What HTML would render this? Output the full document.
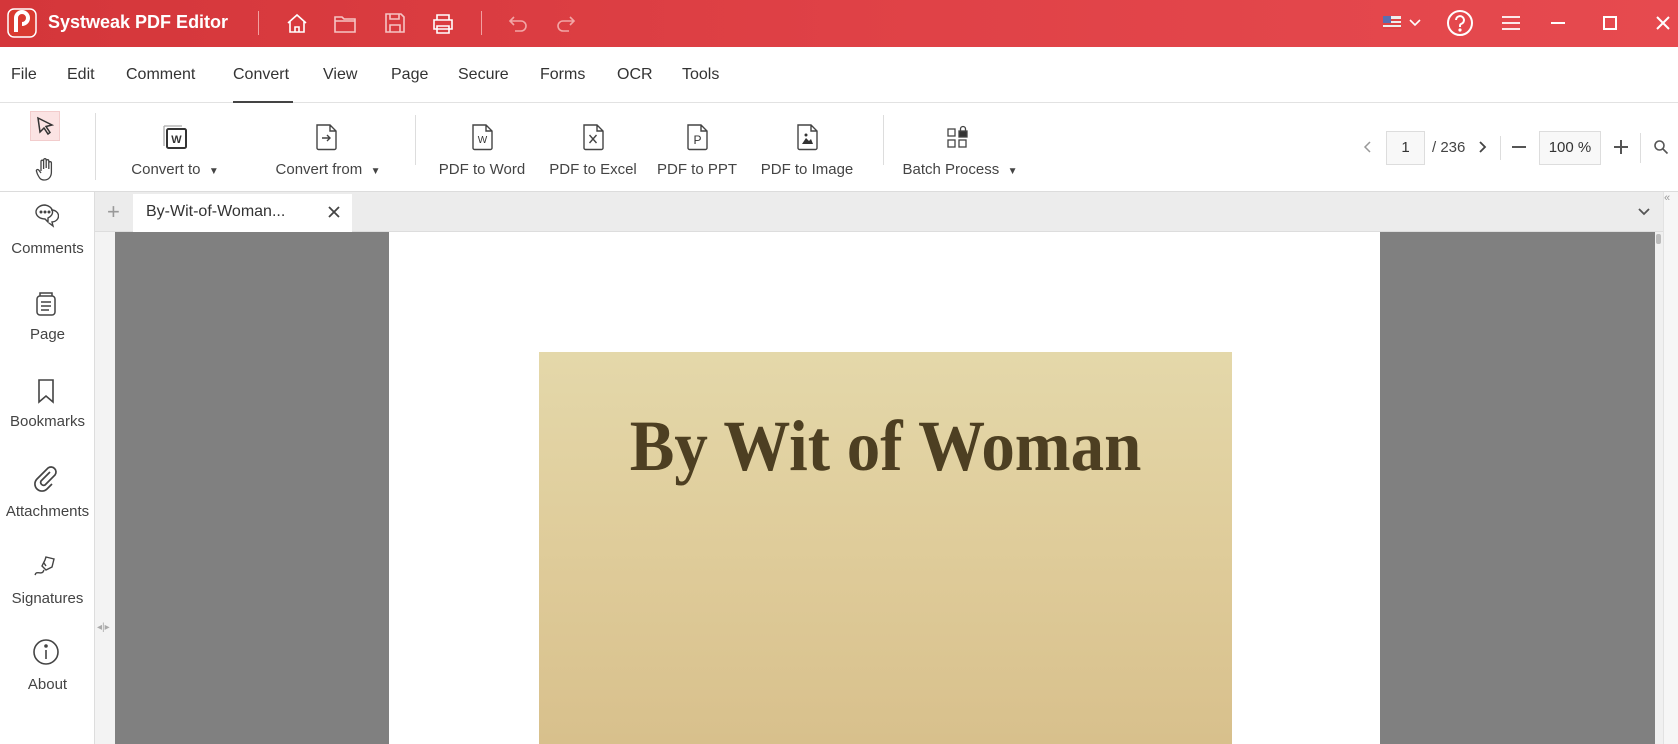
<!DOCTYPE html>
<html><head><meta charset="utf-8"><style>
*{margin:0;padding:0;box-sizing:border-box}
body{width:1678px;height:744px;overflow:hidden;font-family:"Liberation Sans",sans-serif;background:#fff;position:relative;color:#333}
.abs{position:absolute}
#title{left:0;top:0;width:1678px;height:47px;background:linear-gradient(90deg,#d4363a,#df4146 50%,#e64a4f)}
#menu{top:47px;left:0;width:1678px;height:56px;border-bottom:1px solid #e2e2e2;background:#fff}
.mi{position:absolute;top:19px;font-size:16px;color:#333}
#tb{top:103px;left:0;width:1678px;height:89px;border-bottom:1px solid #dcdcdc;background:#fff}
.lbl{position:absolute;font-size:15px;color:#444;white-space:nowrap;transform:translateX(-50%);top:58px}
.tic{position:absolute;top:19px;transform:translateX(-50%)}
.sep{position:absolute;width:1px;background:#ddd}
.sb{position:absolute;left:0;width:95px;text-align:center;font-size:15px;color:#444}
</style></head><body>
<div id="title" class="abs">
 <svg class="abs" style="left:7px;top:8px" width="30" height="30" viewBox="0 0 30 30"><rect x="1" y="1" width="28" height="28" rx="6" fill="#d93a30" stroke="#fff" stroke-width="1.5"/><path d="M9 24V10a6 6 0 0 1 12 0a6 6 0 0 1-6 6" fill="none" stroke="#fff" stroke-width="4"/></svg>
 <div class="abs" style="left:48px;top:12px;color:#fff;font-weight:bold;font-size:18px">Systweak PDF Editor</div>
 <div class="abs" style="left:258px;top:11px;width:1px;height:24px;background:#f2a0a0"></div>
 <div class="abs" style="left:481px;top:11px;width:1px;height:24px;background:#f2a0a0"></div>
 <svg class="abs" style="left:285px;top:12px" width="24" height="24" viewBox="0 0 24 24" fill="none" stroke="#fff" stroke-width="1.6"><path d="M3 11L12 3l9 8M5 9v11h14V9M10 20v-5h4v5"/></svg>
 <svg class="abs" style="left:333px;top:12px" width="24" height="24" viewBox="0 0 24 24" fill="none" stroke="#f6c4c4" stroke-width="1.6"><path d="M2 5h7l2 2h11v13H2zM2 9h20"/></svg>
 <svg class="abs" style="left:383px;top:11px" width="24" height="24" viewBox="0 0 24 24" fill="none" stroke="#f6c4c4" stroke-width="1.6"><path d="M3 3h15l3 3v15H3zM7 3v5h9V3M7 21v-7h10v7"/></svg>
 <svg class="abs" style="left:431px;top:12px" width="24" height="24" viewBox="0 0 24 24" fill="none" stroke="#fff" stroke-width="1.6"><path d="M6 8V3h12v5M3 8h18v9H3zM6 14h12v7H6z"/></svg>
 <svg class="abs" style="left:506px;top:12px" width="24" height="24" viewBox="0 0 24 24" fill="none" stroke="#f2a6a6" stroke-width="1.6"><path d="M8 5L4 9l4 4M4 9h11a5 5 0 0 1 0 10H9"/></svg>
 <svg class="abs" style="left:554px;top:12px" width="24" height="24" viewBox="0 0 24 24" fill="none" stroke="#f2a6a6" stroke-width="1.6"><path d="M16 5l4 4-4 4M20 9H9a5 5 0 0 0 0 10h6"/></svg>
 <svg class="abs" style="left:1383px;top:16px" width="18" height="13" viewBox="0 0 18 13"><rect width="18" height="13" fill="#eee"/><rect y="3" width="18" height="2" fill="#d44"/><rect y="7" width="18" height="2" fill="#d44"/><rect y="11" width="18" height="2" fill="#d44"/><rect width="8" height="7" fill="#5a6fb0"/></svg>
 <svg class="abs" style="left:1408px;top:17px" width="14" height="12" viewBox="0 0 14 12" fill="none" stroke="#fff" stroke-width="1.6"><path d="M2 3l5 5 5-5"/></svg>
 <svg class="abs" style="left:1446px;top:9px" width="28" height="28" viewBox="0 0 28 28" fill="none" stroke="#fff" stroke-width="2"><circle cx="14" cy="14" r="12"/><path d="M10 11a4 4 0 1 1 5 4c-1 .5-1 1-1 3"/><circle cx="14" cy="21" r=".6" fill="#fff"/></svg>
 <svg class="abs" style="left:1500px;top:13px" width="22" height="20" viewBox="0 0 22 20" fill="none" stroke="#fff" stroke-width="1.8"><path d="M2 4h18M2 10h18M2 16h18"/></svg>
 <div class="abs" style="left:1551px;top:22px;width:14px;height:2px;background:#fff"></div>
 <div class="abs" style="left:1603px;top:16px;width:14px;height:14px;border:2px solid #fff"></div>
 <svg class="abs" style="left:1655px;top:15px" width="16" height="16" viewBox="0 0 16 16" stroke="#fff" stroke-width="2"><path d="M2 2l12 12M14 2L2 14"/></svg>
</div>
<div id="menu" class="abs">
 <span class="mi" style="left:11px">File</span><span class="mi" style="left:67px">Edit</span><span class="mi" style="left:126px">Comment</span><span class="mi" style="left:233px">Convert</span><span class="mi" style="left:323px">View</span><span class="mi" style="left:391px">Page</span><span class="mi" style="left:458px">Secure</span><span class="mi" style="left:540px">Forms</span><span class="mi" style="left:617px">OCR</span><span class="mi" style="left:682px">Tools</span>
 <div class="abs" style="left:233px;top:54px;width:60px;height:2px;background:#444"></div>
</div>
<div id="tb" class="abs">
 <div class="abs" style="left:30px;top:8px;width:30px;height:30px;background:#fbe3e3;border:1px solid #f2cccc"></div>
 <svg class="abs" style="left:34px;top:12px" width="22" height="22" viewBox="0 0 22 22" fill="none" stroke="#333" stroke-width="1.5"><path d="M4 3l14 7-6 1.5 4 6-2 1.5-4-6-4 4z"/></svg>
 <svg class="abs" style="left:34px;top:55px" width="22" height="24" viewBox="0 0 22 24" fill="none" stroke="#444" stroke-width="1.3"><path d="M7 13V3.5a1.3 1.3 0 0 1 2.6 0V11M9.6 10V2a1.3 1.3 0 0 1 2.6 0v8M12.2 10V3a1.3 1.3 0 0 1 2.6 0v8M14.8 11V5a1.3 1.3 0 0 1 2.6 0v9c0 5-3 8-7 8s-5-2-7-6l-1-3a1.3 1.3 0 0 1 2.3-1L7 15"/></svg>
 <div class="sep" style="left:95px;top:10px;height:67px"></div>
 <div class="sep" style="left:415px;top:12px;height:50px"></div>
 <div class="sep" style="left:883px;top:12px;height:50px"></div>
 <svg class="tic" style="left:175px" width="30" height="30" viewBox="0 0 30 30" fill="none"><path d="M4 4h18" stroke="#aaa" stroke-width="1.3"/><path d="M4 4v20" stroke="#aaa" stroke-width="1.3"/><rect x="7" y="7" width="19" height="19" rx="1.5" stroke="#333" stroke-width="2"/><text x="16.5" y="21" font-size="11" font-weight="bold" text-anchor="middle" fill="#333" font-family="Liberation Sans">W</text></svg>
 <svg class="tic" style="left:326px" width="30" height="30" viewBox="0 0 30 30" fill="none" stroke="#444" stroke-width="1.4"><path d="M6 3h13l6 6v17a1.5 1.5 0 0 1-1.5 1.5h-16A1.5 1.5 0 0 1 6 26zM19 3v6h6M11 16h8M16 13l3 3-3 3"/></svg>
 <svg class="tic" style="left:482px" width="30" height="30" viewBox="0 0 30 30" fill="none" stroke="#444" stroke-width="1.4"><path d="M6 3h13l6 6v17a1.5 1.5 0 0 1-1.5 1.5h-16A1.5 1.5 0 0 1 6 26zM19 3v6h6"/><text x="15.5" y="21" font-size="10" text-anchor="middle" fill="#333" stroke="none" font-family="Liberation Sans">W</text></svg>
 <svg class="tic" style="left:593px" width="30" height="30" viewBox="0 0 30 30" fill="none" stroke="#444" stroke-width="1.4"><path d="M6 3h13l6 6v17a1.5 1.5 0 0 1-1.5 1.5h-16A1.5 1.5 0 0 1 6 26zM19 3v6h6M11.5 13l7 8M18.5 13l-7 8"/></svg>
 <svg class="tic" style="left:697px" width="30" height="30" viewBox="0 0 30 30" fill="none" stroke="#444" stroke-width="1.4"><path d="M6 3h13l6 6v17a1.5 1.5 0 0 1-1.5 1.5h-16A1.5 1.5 0 0 1 6 26zM19 3v6h6"/><text x="15.5" y="22" font-size="12" text-anchor="middle" fill="#333" stroke="none" font-family="Liberation Sans">P</text></svg>
 <svg class="tic" style="left:807px" width="30" height="30" viewBox="0 0 30 30" fill="none" stroke="#444" stroke-width="1.4"><path d="M6 3h13l6 6v17a1.5 1.5 0 0 1-1.5 1.5h-16A1.5 1.5 0 0 1 6 26zM19 3v6h6"/><path d="M10 22l4-6 3 3 2-2 2 5z" fill="#333" stroke="none"/><circle cx="14" cy="13" r="1.5" fill="#333" stroke="none"/></svg>
 <svg class="tic" style="left:958px" width="30" height="30" viewBox="0 0 30 30" fill="none" stroke="#444" stroke-width="1.3"><rect x="5" y="7" width="7" height="7"/><rect x="5" y="18" width="7" height="7"/><rect x="16" y="18" width="7" height="7"/><rect x="16" y="9" width="8" height="6" fill="#333"/><path d="M17.5 9V7a2.5 2.5 0 0 1 5 0v2"/></svg>
 <span class="lbl" style="left:175px">Convert to &nbsp;<small style="font-size:10px">▼</small></span>
 <span class="lbl" style="left:328px">Convert from &nbsp;<small style="font-size:10px">▼</small></span>
 <span class="lbl" style="left:482px">PDF to Word</span>
 <span class="lbl" style="left:593px">PDF to Excel</span>
 <span class="lbl" style="left:697px">PDF to PPT</span>
 <span class="lbl" style="left:807px">PDF to Image</span>
 <span class="lbl" style="left:960px">Batch Process &nbsp;<small style="font-size:10px">▼</small></span>
 <svg class="abs" style="left:1362px;top:36px" width="12" height="16" viewBox="0 0 12 16" fill="none" stroke="#999" stroke-width="1.5"><path d="M8 3L3 8l5 5"/></svg>
 <div class="abs" style="left:1386px;top:28px;width:39px;height:34px;border:1px solid #ddd;background:#f8f8f8;font-size:15px;text-align:center;line-height:32px">1</div>
 <span class="abs" style="left:1432px;top:36px;font-size:15px;color:#444">/ 236</span>
 <svg class="abs" style="left:1476px;top:36px" width="12" height="16" viewBox="0 0 12 16" fill="none" stroke="#444" stroke-width="1.8"><path d="M4 3l5 5-5 5"/></svg>
 <div class="sep" style="left:1500px;top:33px;height:24px"></div>
 <div class="abs" style="left:1512px;top:43px;width:14px;height:2px;background:#555"></div>
 <div class="abs" style="left:1539px;top:28px;width:62px;height:34px;border:1px solid #ddd;background:#f8f8f8;font-size:15px;text-align:center;line-height:32px">100 %</div>
 <svg class="abs" style="left:1613px;top:36px" width="16" height="16" viewBox="0 0 16 16" stroke="#555" stroke-width="2"><path d="M8 1v14M1 8h14"/></svg>
 <div class="sep" style="left:1640px;top:30px;height:30px"></div>
 <svg class="abs" style="left:1653px;top:36px" width="16" height="16" viewBox="0 0 16 16" fill="none" stroke="#555" stroke-width="1.6"><circle cx="6.5" cy="6.5" r="4.5"/><path d="M10 10l4.5 4.5"/></svg>
</div>
<!-- sidebar -->
<div class="abs" style="left:0;top:192px;width:95px;height:552px;background:#fff;border-right:1px solid #ddd"></div>
<div class="abs" style="left:95px;top:192px;width:20px;height:552px;background:#f3f3f3"></div>
<svg class="abs" style="left:33px;top:202px" width="26" height="26" viewBox="0 0 26 26" fill="none" stroke="#444" stroke-width="1.4"><path d="M12 3a9 7 0 1 0 0 14l3 3v-4a9 7 0 0 0-3-13z"/><path d="M18 8a7 6 0 0 1 1 12l1 4-4-3"/><circle cx="8" cy="10" r=".8" fill="#444"/><circle cx="12" cy="10" r=".8" fill="#444"/><circle cx="16" cy="10" r=".8" fill="#444"/></svg>
<div class="sb" style="top:240px">Comments</div>
<svg class="abs" style="left:34px;top:291px" width="24" height="26" viewBox="0 0 24 26" fill="none" stroke="#444" stroke-width="1.5"><rect x="3" y="5" width="18" height="19" rx="3"/><path d="M6 5V2h12v3M7 11h10M7 15h10M7 19h8"/></svg>
<div class="sb" style="top:326px">Page</div>
<svg class="abs" style="left:35px;top:378px" width="22" height="26" viewBox="0 0 22 26" fill="none" stroke="#444" stroke-width="1.6"><path d="M4 2h14v22l-7-6-7 6z"/></svg>
<div class="sb" style="top:413px">Bookmarks</div>
<svg class="abs" style="left:33px;top:464px" width="26" height="28" viewBox="0 0 26 28" fill="none" stroke="#444" stroke-width="1.7"><path d="M17 8l-9 9a3 3 0 0 0 4 4l10-10a5 5 0 0 0-7-7L4 15a7 7 0 0 0 10 10l5-5"/></svg>
<div class="sb" style="top:503px">Attachments</div>
<svg class="abs" style="left:32px;top:553px" width="28" height="26" viewBox="0 0 28 26" fill="none" stroke="#444" stroke-width="1.4"><path d="M14 4l8 2-2 8-6 3-4-4 3-6zM14 13l-2-3M4 20c3-1 5 1 7-1l1-2M4 20l-1 2"/></svg>
<div class="sb" style="top:590px">Signatures</div>
<svg class="abs" style="left:32px;top:638px" width="28" height="28" viewBox="0 0 28 28" fill="none" stroke="#444" stroke-width="1.6"><circle cx="14" cy="14" r="12"/><path d="M14 12v9"/><circle cx="14" cy="8" r="1" fill="#444"/></svg>
<div class="sb" style="top:676px">About</div>
<div class="abs" style="left:97px;top:622px;font-size:10px;color:#aaa">◂|▸</div>
<!-- tab bar -->
<div class="abs" style="left:95px;top:192px;width:1568px;height:40px;background:#ececec;border-bottom:1px solid #ddd"></div>
<div class="abs" style="left:107px;top:199px;font-size:22px;color:#999">+</div>
<div class="abs" style="left:133px;top:194px;width:219px;height:38px;background:#fff"></div>
<div class="abs" style="left:146px;top:203px;font-size:16px;color:#333">By-Wit-of-Woman...</div>
<svg class="abs" style="left:327px;top:205px" width="14" height="14" viewBox="0 0 14 14" stroke="#444" stroke-width="1.8"><path d="M2 2l10 10M12 2L2 12"/></svg>
<svg class="abs" style="left:1636px;top:206px" width="16" height="12" viewBox="0 0 16 12" fill="none" stroke="#555" stroke-width="1.8"><path d="M3 3l5 5 5-5"/></svg>
<div class="abs" style="left:1663px;top:192px;width:15px;height:552px;background:#f6f6f6;border-left:1px solid #e2e2e2"></div>
<div class="abs" style="left:1664px;top:192px;font-size:11px;color:#999">«</div>
<!-- document -->
<div class="abs" style="left:115px;top:232px;width:1540px;height:512px;background:#808080"></div>
<div class="abs" style="left:1655px;top:232px;width:8px;height:512px;background:#f0f0f0"></div>
<div class="abs" style="left:1656px;top:234px;width:5px;height:10px;background:#bbb;border-radius:2px"></div>
<div class="abs" style="left:389px;top:232px;width:991px;height:512px;background:#fff"></div>
<div class="abs" style="left:539px;top:352px;width:693px;height:392px;background:linear-gradient(180deg,#e4d8aa,#dfcc9a 50%,#d8c08c)"></div>
<div class="abs" style="left:539px;top:405px;width:693px;text-align:center;font-family:'Liberation Serif',serif;font-weight:bold;font-size:72px;color:#4d3f22;transform:scaleX(0.93)">By Wit of Woman</div>
</body></html>
